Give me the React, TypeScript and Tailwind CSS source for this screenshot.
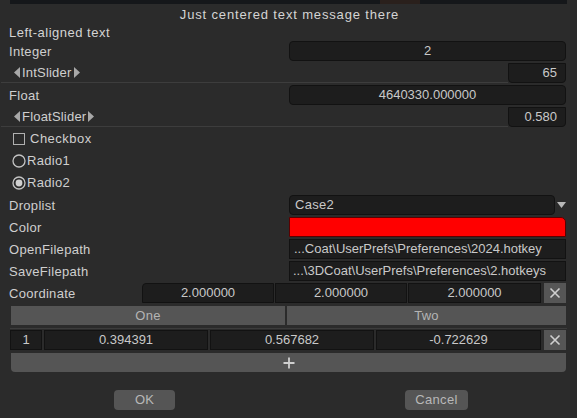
import React from "react";

const font = { fontFamily: '"Liberation Sans", Arial, sans-serif' };

const Label = ({ children }: { children: React.ReactNode }) => (
  <div className="flex-1 pl-[9px] text-[13px] tracking-[0.3px] text-[#cfcfcf] leading-none">{children}</div>
);

const Field = ({ children, className = "" }: { children: React.ReactNode; className?: string }) => (
  <div
    className={`h-5 flex items-center justify-center bg-[#1d1d1d] border border-[#121212] text-[13px] text-[#c9c9c9] ${className}`}
  >
    {children}
  </div>
);

const XButton = () => (
  <div className="w-[22px] h-5 bg-[#565656] flex items-center justify-center">
    <svg width="12" height="12" viewBox="0 0 12 12">
      <path d="M1.5 1.5 L10.5 10.5 M10.5 1.5 L1.5 10.5" stroke="#cfcfcf" strokeWidth="1.6" />
    </svg>
  </div>
);

const Arrow = ({ dir }: { dir: "left" | "right" }) => (
  <svg width="6" height="11" viewBox="0 0 6 11" className="shrink-0">
    {dir === "left" ? (
      <path d="M6 0 L0 5.5 L6 11 Z" fill="#a8a8a8" />
    ) : (
      <path d="M0 0 L6 5.5 L0 11 Z" fill="#a8a8a8" />
    )}
  </svg>
);

const SliderRow = ({ name, value }: { name: string; value: string }) => (
  <div className="h-5 flex items-stretch">
    <div className="flex-1 flex items-center gap-[2px] pl-[13px] border-b border-[#3d3d3d] ml-[1px] text-[13px] text-[#cfcfcf]">
      <Arrow dir="left" />
      <span className="tracking-[0.2px]">{name}</span>
      <Arrow dir="right" />
    </div>
    <Field className="w-[58px] justify-end pr-[8px] rounded-b-[4px]">{value}</Field>
  </div>
);

export default function App() {
  return (
    <div className="w-[577px] h-[418px] bg-[#2b2b2b] overflow-hidden select-none" style={font}>
      <div className="mx-[10px] h-1 bg-[#15171a] flex justify-between">
        <div className="w-[70px]" />
        <div className="w-[40px] bg-[#2a201c] ml-[300px]" />
        <div className="flex-1" />
      </div>

      <div className="h-[21px] flex items-center justify-center text-[13px] tracking-[0.85px] text-[#d4d4d4] pl-[2px]">
        Just centered text message there
      </div>
      <div className="h-[16px] flex items-center pl-[9px] text-[13px] tracking-[0.5px] text-[#d4d4d4]">
        Left-aligned text
      </div>

      <div className="flex flex-col gap-[2px] pr-[11px]">
        <div className="h-5 flex items-center">
          <Label>Integer</Label>
          <Field className="w-[277px] rounded-[4px]">2</Field>
        </div>
        <SliderRow name="IntSlider" value="65" />
        <div className="h-5 flex items-center">
          <Label>Float</Label>
          <Field className="w-[277px] rounded-[4px]">4640330.000000</Field>
        </div>
        <SliderRow name="FloatSlider" value="0.580" />

        <div className="h-5 flex items-center gap-[5px] pl-[13px] text-[13px] text-[#cfcfcf]">
          <div className="w-3 h-3 border border-[#b0b0b0]" />
          <span className="tracking-[0.5px]">Checkbox</span>
        </div>
        <div className="h-5 flex items-center gap-[1px] pl-[12px] text-[13px] text-[#cfcfcf]">
          <svg width="14" height="14" viewBox="0 0 14 14">
            <circle cx="7" cy="7" r="6" fill="none" stroke="#c4c4c4" strokeWidth="1.3" />
          </svg>
          <span className="tracking-[0.3px]">Radio1</span>
        </div>
        <div className="h-5 flex items-center gap-[1px] pl-[12px] text-[13px] text-[#cfcfcf]">
          <svg width="14" height="14" viewBox="0 0 14 14">
            <circle cx="7" cy="7" r="6" fill="none" stroke="#c4c4c4" strokeWidth="1.3" />
            <circle cx="7" cy="7" r="3.4" fill="#d0d0d0" />
          </svg>
          <span className="tracking-[0.3px]">Radio2</span>
        </div>

        <div className="h-5 flex items-center">
          <Label>Droplist</Label>
          <Field className="w-[266px] rounded-[4px] justify-start pl-[5px] tracking-[0.3px]">Case2</Field>
          <div className="w-[11px] flex justify-end">
            <svg width="9" height="6" viewBox="0 0 9 6">
              <path d="M0 0 L9 0 L4.5 6 Z" fill="#b8b8b8" />
            </svg>
          </div>
        </div>
        <div className="h-5 flex items-center">
          <Label>Color</Label>
          <div className="w-[277px] h-5 bg-[#ff0000] border border-[#5a0000] rounded-tr-[5px]" />
        </div>
        <div className="h-5 flex items-center">
          <Label>OpenFilepath</Label>
          <Field className="w-[277px] justify-start pl-[4px] overflow-hidden whitespace-nowrap">
            ...Coat\UserPrefs\Preferences\2024.hotkey
          </Field>
        </div>
        <div className="h-5 flex items-center">
          <Label>SaveFilepath</Label>
          <Field className="w-[277px] justify-start pl-[3px] overflow-hidden whitespace-nowrap">
            ...\3DCoat\UserPrefs\Preferences\2.hotkeys
          </Field>
        </div>
        <div className="h-5 flex items-center">
          <Label>Coordinate</Label>
          <div className="flex gap-[1px] items-center">
            <Field className="w-[132px] rounded-tl-[4px]">2.000000</Field>
            <Field className="w-[132px]">2.000000</Field>
            <Field className="w-[133px]">2.000000</Field>
          </div>
          <div className="ml-[3px]">
            <XButton />
          </div>
        </div>

        <div className="h-[19px] flex gap-[2px] pl-[11px] mt-[1px] text-[13px] tracking-[0.3px] text-[#b4b4b4]">
          <div className="flex-1 bg-[#555555] flex items-center justify-center">One</div>
          <div className="w-[279px] bg-[#555555] flex items-center justify-center">Two</div>
        </div>
      </div>

      <div className="mx-[10px] mt-[3px] border-t border-[#3c3c3c]" />

      <div className="flex flex-col gap-[3px] pr-[11px] pl-[10px] mt-[1px]">
        <div className="h-5 flex items-center gap-[2px]">
          <Field className="w-[32px]">1</Field>
          <Field className="w-[164px]">0.394391</Field>
          <Field className="w-[164px]">0.567682</Field>
          <Field className="w-[165px]">-0.722629</Field>
          <div className="ml-[1px]">
            <XButton />
          </div>
        </div>
        <div className="h-[19px] ml-[1px] bg-[#555555] rounded-b-[4px] flex items-center justify-center">
          <svg width="12" height="12" viewBox="0 0 12 12">
            <path d="M6 0.5 V11.5 M0.5 6 H11.5" stroke="#cfcfcf" strokeWidth="1.8" />
          </svg>
        </div>
      </div>

      <div className="mt-[18px] flex text-[13px] text-[#b8b8b8]">
        <div className="ml-[114px] w-[61px] h-[20px] bg-[#555555] rounded-[4px] flex items-center justify-center">
          OK
        </div>
        <div className="ml-[230px] w-[63px] h-[20px] bg-[#555555] rounded-[4px] flex items-center justify-center tracking-[0.3px]">
          Cancel
        </div>
      </div>
    </div>
  );
}
